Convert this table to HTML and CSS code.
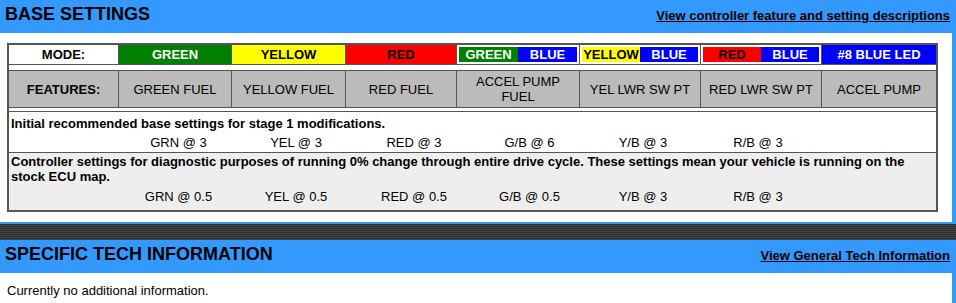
FILE: index.html
```html
<!DOCTYPE html>
<html lang="en">
<head>
<meta charset="utf-8">
<title>Base Settings</title>
<link rel="stylesheet" href="styles.css">
</head>
<body>
  <div class="bar">
    <h2 class="bar-title">BASE SETTINGS</h2>
    <a class="bar-link" href="#">View controller feature and setting descriptions</a>
  </div>
  <div class="panel panel-table">
    <div class="tbl">
      <div class="row row-mode">
        <div class="cell mode-label">MODE:</div>
        <div class="cell c-green">GREEN</div>
        <div class="cell c-yellow">YELLOW</div>
        <div class="cell c-red">RED</div>
        <div class="cell split"><span class="half c-green">GREEN</span><span class="half c-blue">BLUE</span></div>
        <div class="cell split"><span class="half c-yellow">YELLOW</span><span class="half c-blue">BLUE</span></div>
        <div class="cell split"><span class="half c-red">RED</span><span class="half c-blue">BLUE</span></div>
        <div class="cell c-blue">#8 BLUE LED</div>
      </div>
      <div class="gap gap-a"></div>
      <div class="row row-feat">
        <div class="cell feat-label">FEATURES:</div>
        <div class="cell">GREEN FUEL</div>
        <div class="cell">YELLOW FUEL</div>
        <div class="cell">RED FUEL</div>
        <div class="cell">ACCEL PUMP FUEL</div>
        <div class="cell">YEL LWR SW PT</div>
        <div class="cell">RED LWR SW PT</div>
        <div class="cell">ACCEL PUMP</div>
      </div>
      <div class="gap gap-b"></div>
      <div class="note note-white">
        <p class="note-text">Initial recommended base settings for stage 1 modifications.</p>
        <div class="vals">
          <span></span>
          <span>GRN @ 3</span>
          <span>YEL @ 3</span>
          <span>RED @ 3</span>
          <span>G/B @ 6</span>
          <span>Y/B @ 3</span>
          <span>R/B @ 3</span>
          <span></span>
        </div>
      </div>
      <div class="note note-grey">
        <p class="note-text">Controller settings for diagnostic purposes of running 0% change through entire drive cycle. These settings mean your vehicle is running on the stock ECU map.</p>
        <div class="vals">
          <span></span>
          <span>GRN @ 0.5</span>
          <span>YEL @ 0.5</span>
          <span>RED @ 0.5</span>
          <span>G/B @ 0.5</span>
          <span>Y/B @ 3</span>
          <span>R/B @ 3</span>
          <span></span>
        </div>
      </div>
    </div>
  </div>
  <div class="stripes"></div>
  <div class="bar">
    <h2 class="bar-title">SPECIFIC TECH INFORMATION</h2>
    <a class="bar-link" href="#">View General Tech Information</a>
  </div>
  <div class="panel panel-info">
    <p class="info-text">Currently no additional information.</p>
  </div>
</body>
</html>
```

FILE: styles.css
```css
* {
  box-sizing: border-box;
}

html, body {
  margin: 0;
  padding: 0;
}

body {
  background: #3399ff;
  font-family: "Liberation Sans", Arial, sans-serif;
  color: #000;
  font-size: 13px;
  line-height: 15px;
}

/* blue section header */
.bar {
  display: flex;
  justify-content: space-between;
  align-items: flex-start;
  height: 33px;
  padding: 0 6px 0 5px;
  background: #3399ff;
}

.bar-title {
  margin: 0;
  padding-top: 4px;
  font-size: 18px;
  line-height: 21px;
  font-weight: bold;
}

.bar-link {
  padding-top: 8px;
  font-size: 13px;
  line-height: 15px;
  font-weight: bold;
  color: #000;
  text-decoration: underline;
}

/* white content panels */
.panel {
  background: #fff;
  margin-right: 4px;
}

.panel-table {
  padding: 10px 0 10px 7px;
}

.panel-info {
  height: 31px;
  padding: 10px 0 0 7px;
}

.info-text {
  margin: 0;
}

/* dark divider between sections */
.stripes {
  margin-top: 2px;
  height: 16px;
  background: repeating-linear-gradient(to bottom, #2b2b2b 0 1px, #474747 1px 2px);
}

/* settings table */
.tbl {
  width: 931px;
  border: 2px solid #555;
  background: #fff;
}

.row {
  display: grid;
  grid-template-columns: 110px 113px 114px 111px 123px 121px 121px 114px;
}

.row-mode {
  border-bottom: 1px solid #555;
}

.row-feat {
  border-top: 1px solid #555;
  border-bottom: 1px solid #555;
}

.cell {
  border-right: 1px solid #555;
  display: flex;
  align-items: center;
  justify-content: center;
  text-align: center;
}

.cell:last-child {
  border-right: 0;
}

.row-mode .cell {
  height: 19px;
  font-weight: bold;
  white-space: nowrap;
}

.mode-label {
  background: #fff;
}

.row-feat .cell {
  height: 36px;
  padding: 0 5px;
  background: #bbb;
}

.feat-label {
  font-weight: bold;
}

.c-green {
  background: #008000;
  color: #fff;
}

.c-yellow {
  background: #ffff00;
  color: #000;
}

.c-red {
  background: #ff0000;
  color: #000;
}

.c-blue {
  background: #0000ff;
  color: #fff;
}

.split {
  padding: 2px;
  background: #fff;
  align-items: stretch;
}

.half {
  flex: 1 1 0;
  display: flex;
  align-items: center;
  justify-content: center;
}

.gap-a {
  height: 5px;
}

.gap-b {
  height: 3px;
}

.note {
  border-top: 1px solid #555;
}

.note-white {
  padding: 4px 3px 2px 2px;
  background: #fff;
}

.note-grey {
  padding: 1px 3px 6px 2px;
  background: #eee;
}

.note-text {
  margin: 0;
  font-weight: bold;
}

.vals {
  display: grid;
  grid-template-columns: 109px 117px 118px 118px 113px 114px 116px 1fr;
  text-align: center;
}

.note-white .vals {
  margin-top: 4px;
}

.note-grey .vals {
  margin-top: 5px;
}
```
